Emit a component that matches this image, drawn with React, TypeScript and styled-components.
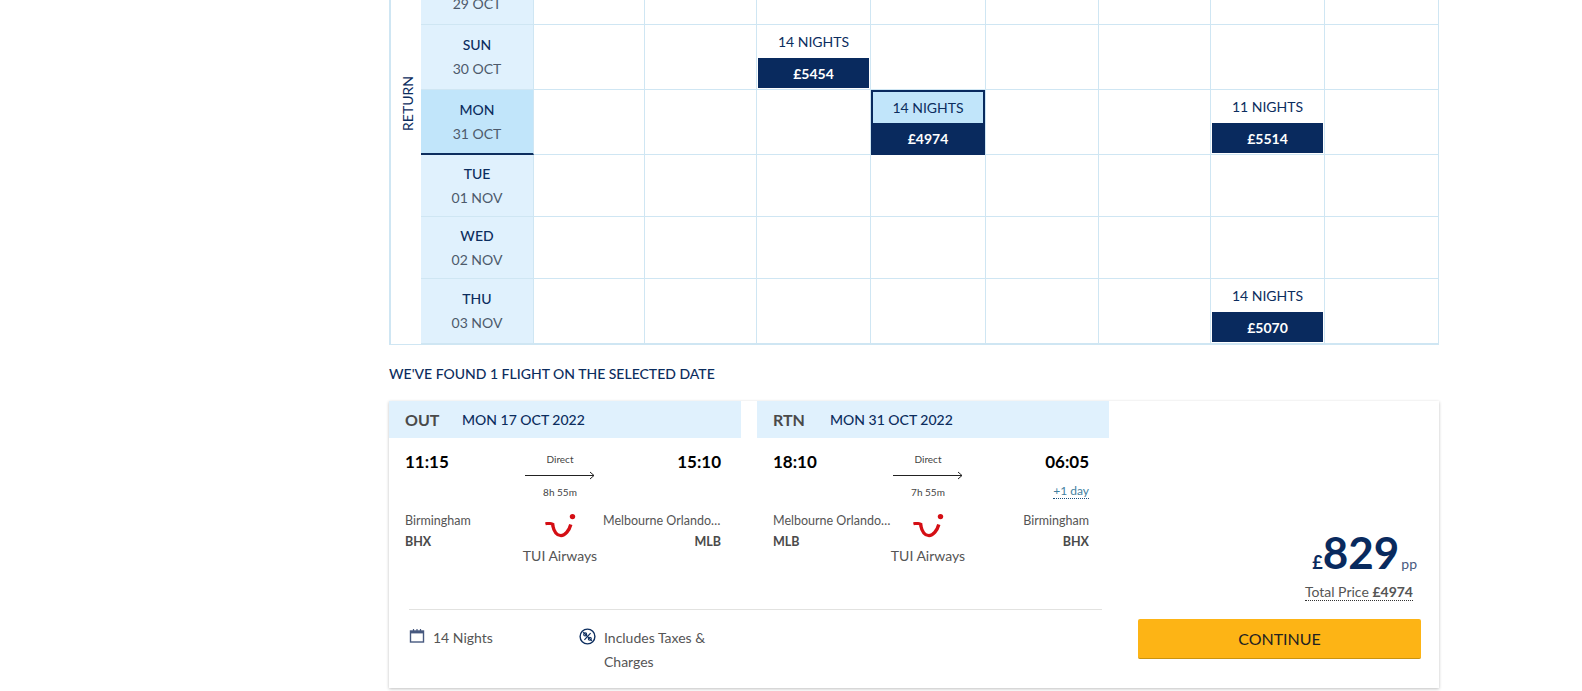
import * as React from 'react';
import styled, { createGlobalStyle } from 'styled-components';

type Deal = { col: number; nights: string; price: string; selected?: boolean };

type Row = {
  day: string;
  date: string;
  height: number;
  selected?: boolean;
  deals?: Deal[];
};

const rows: Row[] = [
  { day: '', date: '', height: 98 },
  { day: 'SAT', date: '29 OCT', height: 65 },
  {
    day: 'SUN',
    date: '30 OCT',
    height: 65,
    deals: [{ col: 2, nights: '14 NIGHTS', price: '£5454' }],
  },
  {
    day: 'MON',
    date: '31 OCT',
    height: 65,
    selected: true,
    deals: [
      { col: 3, nights: '14 NIGHTS', price: '£4974', selected: true },
      { col: 6, nights: '11 NIGHTS', price: '£5514' },
    ],
  },
  { day: 'TUE', date: '01 NOV', height: 62 },
  { day: 'WED', date: '02 NOV', height: 62 },
  {
    day: 'THU',
    date: '03 NOV',
    height: 65,
    deals: [{ col: 6, nights: '14 NIGHTS', price: '£5070' }],
  },
];

const priceColumns = [0, 1, 2, 3, 4, 5, 6, 7];

type Leg = {
  tag: string;
  date: string;
  depart: string;
  arrive: string;
  duration: string;
  from: string;
  fromCode: string;
  to: string;
  toCode: string;
  extra?: string;
};

const legs: Leg[] = [
  {
    tag: 'OUT',
    date: 'MON 17 OCT 2022',
    depart: '11:15',
    arrive: '15:10',
    duration: '8h 55m',
    from: 'Birmingham',
    fromCode: 'BHX',
    to: 'Melbourne Orlando International',
    toCode: 'MLB',
  },
  {
    tag: 'RTN',
    date: 'MON 31 OCT 2022',
    depart: '18:10',
    arrive: '06:05',
    duration: '7h 55m',
    from: 'Melbourne Orlando International',
    fromCode: 'MLB',
    to: 'Birmingham',
    toCode: 'BHX',
    extra: '+1 day',
  },
];

const TuiLogo = () => (
  <svg width="32" height="26" viewBox="0 0 32 26">
    <circle cx="28.5" cy="3.6" r="2.7" fill="#d40e14" />
    <path
      d="M1 9.4 C4 8.6 8 9 10.5 10.4 L10.2 13 C8 12 4.5 11.6 1.8 12.2 Z"
      fill="#d40e14"
    />
    <path
      d="M8.6 12 C10 19 13.5 22.6 17 22.6 C21 22.6 25 18 26.8 11.5"
      fill="none"
      stroke="#d40e14"
      strokeWidth="3.4"
    />
  </svg>
);

const CalendarIcon = () => (
  <svg width="16" height="16" viewBox="0 0 16 16">
    <rect x="1.5" y="3" width="13" height="11" fill="none" stroke="#47597f" strokeWidth="1.4" />
    <rect x="1.5" y="3" width="13" height="2.4" fill="#47597f" />
    <path d="M4.5 1v3M8 1v3M11.5 1v3" stroke="#47597f" strokeWidth="1.2" />
  </svg>
);

const TaxIcon = () => (
  <svg width="17" height="17" viewBox="0 0 17 17">
    <circle cx="8.5" cy="8.5" r="7.4" fill="none" stroke="#0c2d5e" strokeWidth="1.4" />
    <path d="M4.2 4.2l8.6 8.6" stroke="#0c2d5e" strokeWidth="1.2" />
    <path d="M11.6 5.2l-6.2 6.6" stroke="#0c2d5e" strokeWidth="1.2" />
    <circle cx="6.2" cy="6.4" r="1.5" fill="none" stroke="#0c2d5e" strokeWidth="1.1" />
    <circle cx="10.8" cy="10.8" r="1.5" fill="none" stroke="#0c2d5e" strokeWidth="1.1" />
  </svg>
);

const FlightLeg = ({ leg }: { leg: Leg }) => (
  <LegBox>
    <LegHeader>
      <LegTag>{leg.tag}</LegTag>
      <LegDate>{leg.date}</LegDate>
    </LegHeader>
    <LegBody>
      <Side>
        <Time>{leg.depart}</Time>
        <Extra />
        <Airport>{leg.from}</Airport>
        <Code>{leg.fromCode}</Code>
      </Side>
      <Middle>
        <Small>Direct</Small>
        <Arrow>
          <svg width="70" height="9" viewBox="0 0 70 9">
            <path d="M0 4.5h69M65 1l4 3.5-4 3.5" fill="none" stroke="#222" strokeWidth="1" />
          </svg>
        </Arrow>
        <Small>{leg.duration}</Small>
        <LogoWrap>
          <TuiLogo />
        </LogoWrap>
        <Carrier>TUI Airways</Carrier>
      </Middle>
      <Side $right>
        <Time>{leg.arrive}</Time>
        <Extra>{leg.extra && <NextDay>{leg.extra}</NextDay>}</Extra>
        <Airport>{leg.to}</Airport>
        <Code>{leg.toCode}</Code>
      </Side>
    </LegBody>
  </LegBox>
);

export default function App() {
  return (
    <Page>
      <GlobalStyle />
      <Content>
        <Grid>
          <ReturnColumn>
            <ReturnLabel>RETURN</ReturnLabel>
          </ReturnColumn>
          <Rows>
            {rows.map((row) => (
              <GridRow key={row.date || 'head'} $height={row.height}>
                <DateCell $selected={row.selected}>
                  <Day>{row.day}</Day>
                  <DateText>{row.date}</DateText>
                </DateCell>
                {priceColumns.map((col) => {
                  const deal = row.deals?.find((d) => d.col === col);
                  return (
                    <PriceCell key={col}>
                      {deal &&
                        (deal.selected ? (
                          <SelectedDeal>
                            <SelectedNights>{deal.nights}</SelectedNights>
                            <SelectedPrice>{deal.price}</SelectedPrice>
                          </SelectedDeal>
                        ) : (
                          <DealBox>
                            <Nights>{deal.nights}</Nights>
                            <PriceTag>{deal.price}</PriceTag>
                          </DealBox>
                        ))}
                    </PriceCell>
                  );
                })}
              </GridRow>
            ))}
          </Rows>
        </Grid>

        <FoundHeading>WE'VE FOUND 1 FLIGHT ON THE SELECTED DATE</FoundHeading>

        <Card>
          <CardMain>
            <Legs>
              {legs.map((leg) => (
                <FlightLeg key={leg.tag} leg={leg} />
              ))}
            </Legs>
            <CardFooter>
              <FooterItem $width={170}>
                <CalendarIcon />
                <span>14 Nights</span>
              </FooterItem>
              <FooterItem $width={150}>
                <TaxIcon />
                <span>Includes Taxes &amp; Charges</span>
              </FooterItem>
            </CardFooter>
          </CardMain>
          <PriceSide>
            <PriceLine>
              <Currency>£</Currency>
              <Amount>829</Amount>
              <PerPerson>pp</PerPerson>
            </PriceLine>
            <TotalPrice>
              Total Price <strong>£4974</strong>
            </TotalPrice>
            <ContinueButton>CONTINUE</ContinueButton>
          </PriceSide>
        </Card>
      </Content>
    </Page>
  );
}

const GlobalStyle = createGlobalStyle`
  html, body {
    margin: 0;
    padding: 0;
    background: #fff;
    font-family: Lato, "Open Sans", sans-serif;
  }
  * {
    box-sizing: border-box;
  }
`;

const Page = styled.div`
  height: 691px;
  overflow: hidden;
`;

/* the page is scrolled down, so the top of the table sits above the window */
const Content = styled.div`
  width: 1050px;
  margin: -138px 0 0 389px;
`;

const Grid = styled.div`
  display: flex;
  border-left: 2px solid #cfe6f3;
  border-bottom: 1px solid #cfe6f3;
`;

const ReturnColumn = styled.div`
  width: 30px;
  display: flex;
  align-items: center;
  justify-content: center;
`;

const ReturnLabel = styled.div`
  transform: rotate(-90deg);
  font-size: 14px;
  color: #0c2d5e;
  margin-left: 2px;
`;

const Rows = styled.div`
  flex: 1;
`;

const GridRow = styled.div<{ $height: number }>`
  display: grid;
  grid-template-columns: 113px 111px 112px 114px 115px 113px 112px 114px 114px;
  height: ${(p) => p.$height}px;
`;

const DateCell = styled.div<{ $selected?: boolean }>`
  display: flex;
  flex-direction: column;
  align-items: center;
  justify-content: center;
  gap: 6px;
  background: ${(p) => (p.$selected ? '#c1e5fa' : '#e0f1fd')};
  border-bottom: ${(p) => (p.$selected ? '2px solid #0c2d5e' : '1px solid #cfe6f3')};
  border-right: 1px solid #cfe6f3;
`;

const Day = styled.div`
  font-size: 14px;
  line-height: 18px;
  font-weight: 500;
  color: #0c2d5e;
`;

const DateText = styled.div`
  font-size: 14px;
  line-height: 18px;
  color: #4d5a6b;
`;

const PriceCell = styled.div`
  display: flex;
  flex-direction: column;
  border-right: 1px solid #cfe6f3;
  border-bottom: 1px solid #cfe6f3;
`;

const DealBox = styled.div`
  flex: 1;
  display: flex;
  flex-direction: column;
  padding: 0 1px 1px 1px;
`;

const Nights = styled.div`
  flex: 1;
  display: flex;
  align-items: center;
  justify-content: center;
  font-size: 14px;
  color: #0c2d5e;
`;

const PriceTag = styled.div`
  height: 30px;
  background: #092a5e;
  color: #fff;
  font-size: 14px;
  font-weight: 700;
  display: flex;
  align-items: center;
  justify-content: center;
`;

const SelectedDeal = styled.div`
  flex: 1;
  display: flex;
  flex-direction: column;
  border: 2px solid #092a5e;
  margin-bottom: -1px;
`;

const SelectedNights = styled(Nights)`
  background: #c1e5fa;
`;

const SelectedPrice = styled(PriceTag)``;

const FoundHeading = styled.h2`
  margin: 19px 0 0;
  font-size: 14px;
  line-height: 20px;
  font-weight: 500;
  color: #0c2d5e;
`;

const Card = styled.div`
  display: flex;
  height: 287px;
  margin-top: 17px;
  background: #fff;
  box-shadow: 0 1px 3px rgba(0, 0, 0, 0.25);
`;

const CardMain = styled.div`
  width: 720px;
  display: flex;
  flex-direction: column;
`;

const Legs = styled.div`
  display: flex;
  gap: 16px;
`;

const LegBox = styled.div`
  width: 352px;
`;

const LegHeader = styled.div`
  height: 37px;
  display: flex;
  align-items: center;
  padding-left: 16px;
  background: #e0f1fd;
`;

const LegTag = styled.span`
  width: 57px;
  font-size: 16px;
  font-weight: 700;
  color: #4a4a4a;
`;

const LegDate = styled.span`
  font-size: 14px;
  font-weight: 500;
  color: #0c2d5e;
`;

const LegBody = styled.div`
  display: grid;
  grid-template-columns: 118px 80px 118px;
  padding: 14px 20px 0 16px;
`;

const Side = styled.div<{ $right?: boolean }>`
  display: flex;
  flex-direction: column;
  min-width: 0;
  text-align: ${(p) => (p.$right ? 'right' : 'left')};
`;

const Time = styled.div`
  font-size: 17px;
  line-height: 20px;
  font-weight: 700;
  color: #000;
`;

const Extra = styled.div`
  height: 41px;
  padding-top: 12px;
  font-size: 12px;
  line-height: 14px;
`;

const NextDay = styled.span`
  color: #3f7f9f;
  border-bottom: 1px dotted #1b4f7a;
`;

const Airport = styled.div`
  font-size: 12.5px;
  line-height: 16px;
  color: #555;
  white-space: nowrap;
  overflow: hidden;
  text-overflow: ellipsis;
`;

const Code = styled.div`
  margin-top: 5px;
  font-size: 12.5px;
  line-height: 16px;
  font-weight: 700;
  color: #4a4a4a;
`;

const Middle = styled.div`
  display: flex;
  flex-direction: column;
  align-items: center;
  padding-right: 6px;
`;

const Small = styled.div`
  font-size: 10px;
  line-height: 14px;
  color: #444;
`;

const Arrow = styled.div`
  height: 9px;
  margin: 5px 0 5px;
  display: flex;
`;

const LogoWrap = styled.div`
  margin-top: 14px;
  height: 26px;
  display: flex;
`;

const Carrier = styled.div`
  margin-top: 8px;
  font-size: 14px;
  line-height: 18px;
  color: #555;
  white-space: nowrap;
`;

const CardFooter = styled.div`
  display: flex;
  margin: auto 7px 0 20px;
  height: 79px;
  padding-top: 16px;
  border-top: 1px solid #e2e2e0;
`;

const FooterItem = styled.div<{ $width: number }>`
  width: ${(p) => p.$width}px;
  display: flex;
  gap: 8px;
  font-size: 14px;
  line-height: 24px;
  color: #555;

  svg {
    flex: none;
    margin-top: 2px;
  }
`;

const PriceSide = styled.div`
  flex: 1;
  display: flex;
  flex-direction: column;
  align-items: flex-end;
  justify-content: flex-end;
  padding: 0 18px 29px 28px;
`;

const PriceLine = styled.div`
  display: flex;
  align-items: baseline;
  margin-right: 4px;
  color: #092a5e;
`;

const Currency = styled.span`
  font-size: 18px;
  font-weight: 700;
`;

const Amount = styled.span`
  font-size: 44px;
  line-height: 50px;
  font-weight: 700;
`;

const PerPerson = styled.span`
  margin-left: 2px;
  font-size: 14px;
  color: #47597f;
`;

const TotalPrice = styled.div`
  margin: 6px 8px 0 0;
  font-size: 14px;
  line-height: 17px;
  color: #555;
  border-bottom: 1px dotted #333;

  strong {
    font-weight: 700;
  }
`;

const ContinueButton = styled.button`
  width: 283px;
  height: 40px;
  margin-top: 18px;
  border: 0;
  border-bottom: 1px solid #c9930f;
  border-radius: 2px;
  background: #fdb415;
  font-family: inherit;
  font-size: 16px;
  color: #222;
`;
